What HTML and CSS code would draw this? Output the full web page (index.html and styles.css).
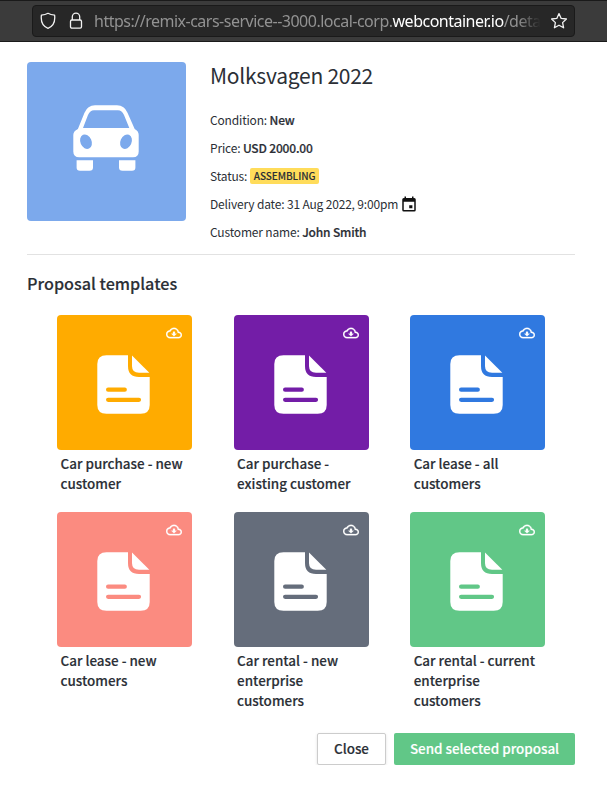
FILE: index.html
```html
<!DOCTYPE html>
<html lang="en">
<head>
<meta charset="utf-8">
<title>Molksvagen 2022</title>
<link rel="stylesheet" href="styles.css">
</head>
<body>
<svg class="defs" width="0" height="0">
  <symbol id="doc" viewBox="0 0 135 135">
    <path fill="#fff" d="M49.5 40.300H71V51Q71 62 82 62H92.7V90Q92.7 98.700 83.7 98.700H49.5Q40.3 98.700 40.3 90V49Q40.3 40.300 49.5 40.300Z"/>
    <path fill="#fff" d="M75 40.5L92.3 57.8H82Q75 57.8 75 51Z"/>
    <path fill="none" stroke="currentColor" stroke-width="4.2" stroke-linecap="round" d="M51.1 74.7H67.8M51.1 84.8H82"/>
  </symbol>
  <symbol id="cloud" viewBox="0 0 24 24">
    <path fill="#fff" stroke="#fff" stroke-width=".4" d="M19.35 10.04C18.67 6.59 15.64 4 12 4 9.11 4 6.6 5.64 5.35 8.04 2.34 8.36 0 10.91 0 14c0 3.31 2.69 6 6 6h13c2.76 0 5-2.24 5-5 0-2.64-2.05-4.78-4.65-4.96zM19 18H6c-2.21 0-4-1.79-4-4 0-2.05 1.53-3.76 3.56-3.97l1.07-.11.5-.95C8.08 7.14 9.94 6 12 6c2.62 0 4.88 1.86 5.39 4.43l.3 1.5 1.53.11c1.56.1 2.78 1.41 2.78 2.96 0 1.65-1.35 3-3 3zm-5.55-8h-2.9v3H8l4 4 4-4h-2.55z"/>
  </symbol>
</svg>
<header class="browser">
  <div class="address">
    <svg class="ic" width="16" height="18" viewBox="0 0 16 18"><path d="M8 1.3C6 2.5 4 3 1.4 3.2C.6 10 3 14.5 8 16.3C13 14.5 15.4 10 14.6 3.2C12 3 10 2.5 8 1.3Z"/></svg>
    <svg class="ic lock" width="14" height="18" viewBox="0 0 14 18"><path d="M3.3 8V4.8a3.7 3.7 0 0 1 7.4 0V8"/><rect x="1.5" y="8" width="11" height="8.2" rx="1.4"/></svg>
    <div class="url">https://remix-cars-service--3000.local-corp.<b>webcontainer.io</b>/detai</div>
    <svg class="ic" width="18" height="18" viewBox="0 0 18 18"><path d="M9 1.6L11.2 6.4L16.4 7L12.6 10.6L13.6 15.8L9 13.2L4.4 15.8L5.4 10.6L1.6 7L6.8 6.4Z"/></svg>
  </div>
</header>
<main class="page">
  <section class="car">
    <svg class="photo" viewBox="0 0 159 159">
      <path fill="#fff" fill-rule="evenodd" d="M50.9 67L57.5 50.8Q60.5 43.300 68 43.300H90Q97.500 43.300 100.500 50.8L107.700 67Q111.700 69 111.700 73V89.500Q111.700 95.300 106 95.300H52.3Q46.3 95.300 46.3 89.500V73Q46.3 69 50.900 67ZM56 66H102.300L97 53Q95 48.300 91 48.300H67Q63 48.300 61 53Z"/>
      <ellipse fill="#7ca9ec" cx="59" cy="79.700" rx="5.600" ry="7.500" transform="rotate(-24 59 79.700)"/>
      <ellipse fill="#7ca9ec" cx="99" cy="79.700" rx="5.600" ry="7.500" transform="rotate(24 99 79.700)"/>
      <path fill="#fff" d="M49.600 98.3H66V105.500Q66 108.700 62.500 108.700H53Q49.600 108.700 49.600 105.500ZM92 98.3H108.400V105.500Q108.400 108.700 105 108.700H95.500Q92 108.700 92 105.500Z"/>
    </svg>
    <div class="info">
      <h1>Molksvagen 2022</h1>
      <p>Condition: <b>New</b></p>
      <p>Price: <b>USD 2000.00</b></p>
      <p>Status: <span class="badge">ASSEMBLING</span></p>
      <p>Delivery date: 31 Aug 2022, 9:00pm <svg class="cal" viewBox="0 0 24 24"><path fill-rule="evenodd" d="M19 4H18V2H16V4H8V2H6V4H5Q3 4 3 6V20Q3 22 5 22H19Q21 22 21 20V6Q21 4 19 4ZM19 20H5V9H19ZM12.300 13.500H16.500V17.700H12.300Z"/></svg></p>
      <p>Customer name: <b>John Smith</b></p>
    </div>
  </section>
  <h2>Proposal templates</h2>
  <section class="grid">
    <article><div class="tile orange"><svg class="doc"><use href="#doc"/></svg><svg class="cloud"><use href="#cloud"/></svg></div><h3>Car purchase - new<br>customer</h3></article>
    <article><div class="tile purple"><svg class="doc"><use href="#doc"/></svg><svg class="cloud"><use href="#cloud"/></svg></div><h3>Car purchase -<br>existing customer</h3></article>
    <article><div class="tile blue"><svg class="doc"><use href="#doc"/></svg><svg class="cloud"><use href="#cloud"/></svg></div><h3>Car lease - all<br>customers</h3></article>
    <article><div class="tile coral"><svg class="doc"><use href="#doc"/></svg><svg class="cloud"><use href="#cloud"/></svg></div><h3>Car lease - new<br>customers</h3></article>
    <article><div class="tile slate"><svg class="doc"><use href="#doc"/></svg><svg class="cloud"><use href="#cloud"/></svg></div><h3>Car rental - new<br>enterprise<br>customers</h3></article>
    <article><div class="tile green"><svg class="doc"><use href="#doc"/></svg><svg class="cloud"><use href="#cloud"/></svg></div><h3>Car rental - current<br>enterprise<br>customers</h3></article>
  </section>
  <footer class="actions">
    <button class="close">Close</button>
    <button class="send">Send selected proposal</button>
  </footer>
</main>
</body>
</html>
```
FILE: styles.css
```css
* { box-sizing: border-box; }
body { margin: 0; background: #fff; color: #2b2f36; font-family: "Noto Sans CJK SC", sans-serif; }
h1, h2, h3, p { margin: 0; white-space: nowrap; }
.defs { display: block; position: absolute; }
.browser { height: 42px; background: #3b3b3b; border-top: 1px solid #1a1a1a; border-bottom: 1px solid #1a1a1a; padding: 4px 32px; }
.address { height: 32px; border: 1px solid #1a1a1a; border-radius: 4px; background: #272727; display: flex; align-items: center; padding: 0 6px 0 7px; }
.ic { fill: none; stroke: #f2f2f2; stroke-width: 1.3; stroke-linejoin: round; flex: none; }
.lock { margin: 0 11px 0 13px; }
.url { flex: 1; overflow: hidden; white-space: nowrap; font: 16px/24px "Noto Sans", sans-serif; color: #929292; margin-right: 5px; letter-spacing: -0.5px; -webkit-mask-image: linear-gradient(to right, #000 94%, transparent 99%); mask-image: linear-gradient(to right, #000 94%, transparent 99%); }
.url b { font-weight: 400; color: #fff; }
.page { padding: 20px 32px 0 27px; }
.car { display: flex; gap: 24px; height: 193px; border-bottom: 1px solid #e2e2e2; }
.photo { width: 159px; height: 159px; background: #7ca9ec; border-radius: 4px; flex: none; }
h1 { font-size: 21px; font-weight: 400; line-height: 26px; margin-bottom: 18px; letter-spacing: -0.25px; }
.info p { font-size: 12px; line-height: 28px; height: 28px; letter-spacing: -0.17px; }
.info b { font-weight: 500; -webkit-text-stroke: 0.2px; }
.badge { display: inline-block; background: #ffdc5a; border-radius: 2px; font-size: 10px; font-weight: 500; line-height: 16px; height: 16px; padding: 0 4px; letter-spacing: -0.05px; -webkit-text-stroke: 0.1px; position: relative; top: -1px; }
.cal { width: 18px; height: 18px; vertical-align: -4px; margin-left: -1px; fill: #111; }
h2 { font-size: 16.2px; font-weight: 500; line-height: 24px; margin: 16px 0 20px; -webkit-text-stroke: 0.15px; }
.grid { display: grid; grid-template-columns: repeat(3, 135px); column-gap: 41.6px; row-gap: 19px; padding-left: 30px; height: 398px; align-content: start; }
.tile { position: relative; height: 135px; border-radius: 4px; }
.doc { display: block; width: 135px; height: 135px; }
.cloud { position: absolute; top: 10px; right: 10px; width: 16px; height: 16px; }
h3 { font-size: 13.45px; font-weight: 500; line-height: 20px; padding: 3px 0 0 3.5px; -webkit-text-stroke: 0.15px; }
.orange { background: #ffab00; color: #ffab00; }
.purple { background: #731da7; color: #731da7; }
.blue { background: #3079e0; color: #3079e0; }
.coral { background: #fb8b80; color: #fb8b80; }
.slate { background: #656d7b; color: #656d7b; }
.green { background: #61c787; color: #61c787; }
.actions { display: flex; justify-content: flex-end; gap: 8px; margin-top: 20px; }
button { height: 32px; padding: 0 0 2px; border-radius: 2px; font: 500 13.45px/28px "Noto Sans CJK SC", sans-serif; white-space: nowrap; -webkit-text-stroke: 0.15px; }
.close { width: 69px; border: 1px solid #ccc; background: #fff; color: #2b2f36; box-shadow: 0 1px 3px rgba(0,0,0,.12); }
.send { width: 181px; border: 0; background: #61c787; color: #fff; }
```
